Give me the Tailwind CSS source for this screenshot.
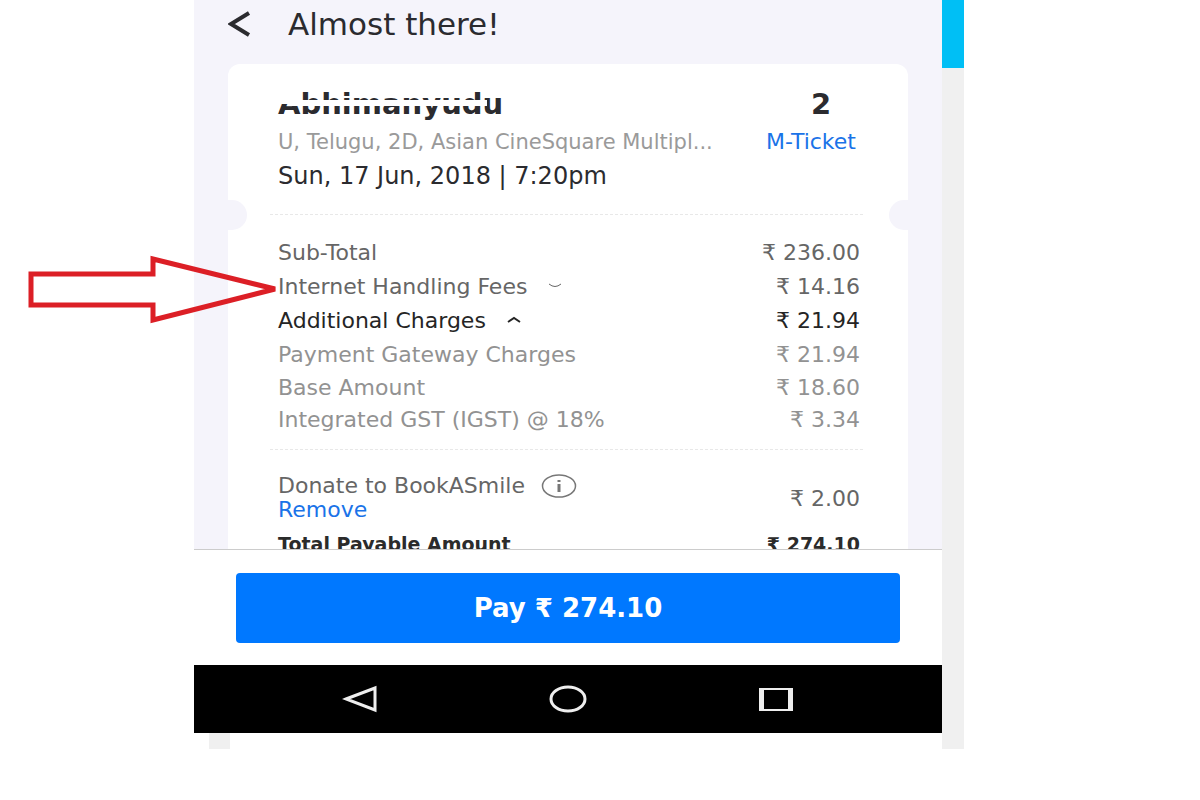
<!DOCTYPE html>
<html lang="en">
<head>
  <meta charset="UTF-8">
  <meta name="viewport" content="width=device-width, initial-scale=1.0">
  <title>Almost there!</title>
  <script src="https://cdn.jsdelivr.net/npm/@tailwindcss/browser@4"></script>
</head>
<body class="relative bg-white font-['DejaVu_Sans',Roboto,sans-serif] text-[#2b2b2f]">
  <div class="flex h-screen pl-[194px] pr-[236px]">

    <!-- Phone screen -->
    <div class="flex flex-1 min-w-0 flex-col">
      <main class="flex min-h-0 flex-1 flex-col overflow-hidden bg-[#f5f4fb] px-[34px]">
        <header class="flex h-12 shrink-0 items-center gap-9">
          <button type="button" aria-label="Back">
            <svg class="block h-[26px] w-6" viewBox="0 0 24 26" fill="none" stroke="#2b2b2f" stroke-width="4"><path d="M21 2 3 13l18 11"/></svg>
          </button>
          <h1 class="text-[31px] leading-8">Almost there!</h1>
        </header>

        <div class="relative mt-4 shrink-0 rounded-xl bg-white pt-6 pr-12 pl-[50px]">
          <div class="absolute top-[136px] left-0 h-[30px] w-[19px] rounded-r-full bg-[#f5f4fb]"></div>
          <div class="absolute top-[136px] right-0 h-[30px] w-[19px] rounded-l-full bg-[#f5f4fb]"></div>

          <section class="flex justify-between">
            <div>
              <!-- Title is partly rubbed out -->
              <h2 class="relative w-fit text-[29px] leading-8 font-bold">Abhimanyudu
                <span class="absolute top-1 left-0 h-[12px] w-[24px] rounded-r-full bg-white"></span>
                <span class="absolute top-[12px] right-4 left-3 h-[6px] bg-white"></span>
              </h2>
              <p class="mt-2 text-[21px] leading-7 text-[#9a9a9a]">U, Telugu, 2D, Asian CineSquare Multipl...</p>
              <p class="mt-1 text-[24px] leading-8">Sun, 17 Jun, 2018 | 7:20pm</p>
            </div>
            <div class="pr-1 text-center">
              <p class="pl-5 text-[29px] leading-8 font-bold">2</p>
              <a href="#" class="mt-2 block text-[22px] leading-7 text-[#1a73e8]">M-Ticket</a>
            </div>
          </section>

          <div class="mt-[22px] mr-[-3px] -ml-2 border-t border-dashed border-[#e8e8e8]"></div>

          <dl class="mt-5 text-[22px] text-[#666]">
            <div class="flex h-[34px] items-center justify-between"><dt>Sub-Total</dt><dd>₹ 236.00</dd></div>
            <div class="flex h-[34px] items-center justify-between">
              <dt><button type="button" class="flex items-center gap-5">Internet Handling Fees
                <svg class="h-2 w-4" viewBox="0 0 16 8" fill="none" stroke="currentColor"><path d="M2 2q6 5 12 0"/></svg>
              </button></dt><dd>₹ 14.16</dd>
            </div>
            <div class="flex h-[34px] items-center justify-between text-[#252525]">
              <dt><button type="button" class="flex items-center gap-5">Additional Charges
                <svg class="h-2 w-4" viewBox="0 0 16 8" fill="none" stroke="currentColor" stroke-width="2"><path d="m2 6 6-4 6 4"/></svg>
              </button></dt><dd>₹ 21.94</dd>
            </div>
            <div class="flex h-[34px] items-center justify-between text-[#929292]"><dt>Payment Gateway Charges</dt><dd>₹ 21.94</dd></div>
            <div class="flex h-8 items-center justify-between text-[#929292]"><dt>Base Amount</dt><dd>₹ 18.60</dd></div>
            <div class="flex h-8 items-center justify-between text-[#929292]"><dt>Integrated GST (IGST) @ 18%</dt><dd>₹ 3.34</dd></div>
          </dl>

          <div class="mt-[14px] mr-[-3px] -ml-2 border-t border-dashed border-[#e8e8e8]"></div>

          <div class="mt-6 flex items-center justify-between text-[22px] text-[#666]">
            <div>
              <div class="flex items-center gap-4 leading-6">Donate to BookASmile
                <button type="button" aria-label="About BookASmile">
                  <svg class="block h-6 w-9" viewBox="0 0 36 24" fill="none" stroke="#777"><ellipse cx="18" cy="12" rx="16.5" ry="11" stroke-width="1.5"/><path d="M18 6v2M18 10v8" stroke-width="3"/></svg>
                </button>
              </div>
              <a href="#" class="block leading-6 text-[#1a73e8]">Remove</a>
            </div>
            <span>₹ 2.00</span>
          </div>
          <div class="mt-[6px] flex justify-between text-[19px] leading-8 font-bold text-[#2b2b2b]"><span>Total Payable Amount</span><span>₹ 274.10</span></div>
        </div>
      </main>

      <div class="border-t border-[#ccc] bg-white px-[42px] pt-[23px] pb-[22px]">
        <button type="button" class="h-[70px] w-full rounded-sm bg-[#0078ff] text-[26px] font-bold text-white">Pay ₹ 274.10</button>
      </div>

      <!-- Android navigation -->
      <nav class="flex h-[68px] items-center bg-black px-[62px]">
        <button type="button" aria-label="Back" class="flex flex-1 justify-center"><svg class="h-7 w-9" viewBox="0 0 36 28" fill="none" stroke="#eee" stroke-width="3"><path d="M4 14 33 3v22z"/></svg></button>
        <button type="button" aria-label="Home" class="flex flex-1 justify-center"><svg class="h-7 w-10" viewBox="0 0 40 28" fill="none" stroke="#eee" stroke-width="3"><ellipse cx="20" cy="14" rx="17" ry="12"/></svg></button>
        <button type="button" aria-label="Recent apps" class="flex flex-1 justify-center"><span class="h-[23px] w-[34px] border-x-[5px] border-y-2 border-[#eee]"></span></button>
      </nav>
      <div class="h-[67px] pl-[15px]"><div class="h-4 w-[21px] bg-[#f0f0f0]"></div></div>
    </div>

    <!-- Page edge behind the phone -->
    <div class="flex w-[22px] flex-col pb-[51px]">
      <div class="h-[68px] bg-[#00bff5]"></div>
      <div class="flex-1 bg-[#f0f0f0]"></div>
    </div>
  </div>

  <!-- Arrow pointing at the handling fees -->
  <svg class="absolute top-[254px] left-[26px] h-[72px] w-[254px]" viewBox="0 0 254 72" fill="none" stroke="#dc1f26" stroke-width="5"><path d="M5 20h122V5l122 30-122 31V51H5z"/></svg>
</body>
</html>
